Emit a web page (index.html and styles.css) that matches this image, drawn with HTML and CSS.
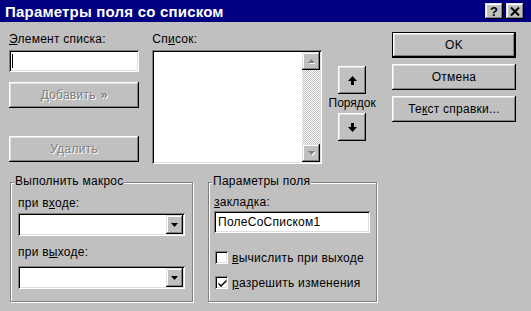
FILE: index.html
```html
<!DOCTYPE html>
<html lang="ru">
<head>
    <meta charset="UTF-8">
    <title>Параметры поля со списком</title>
    <link rel="stylesheet" href="styles.css">
</head>
<body>
    <div class="dialog">
        <div class="titlebar">
            <span class="title">Параметры поля со списком</span>
            <div class="title-btns">
                <div class="tbtn help">?</div>
                <div class="tbtn close">
                    <svg width="10" height="9" viewBox="0 0 10 9"><path d="M1 0.5 L9 8.5 M9 0.5 L1 8.5" stroke="#000" stroke-width="2"/></svg>
                </div>
            </div>
        </div>

        <div class="main">
            <div class="left">
                <div class="top-row">
                    <div class="col-element">
                        <label class="lbl"><u>Э</u>лемент списка:</label>
                        <div class="field element-field"><span class="caret"></span></div>
                        <div class="btn disabled add-btn">Добавить <span class="chev">»</span></div>
                        <div class="btn disabled del-btn">Удалить</div>
                    </div>

                    <div class="col-list">
                        <label class="lbl">Сп<u>и</u>сок:</label>
                        <div class="field listbox">
                            <div class="list-area"></div>
                            <div class="scrollbar">
                                <div class="sbtn">
                                    <svg width="7" height="5" viewBox="0 0 7 5"><path d="M4.5 1 L8 5 L1 5 Z" fill="#fff"/><path d="M3.5 0 L7 4 L0 4 Z" fill="#808080"/></svg>
                                </div>
                                <div class="track"></div>
                                <div class="sbtn">
                                    <svg width="7" height="5" viewBox="0 0 7 5"><path d="M1 1 L8 1 L4.5 5 Z" fill="#fff"/><path d="M0 0 L7 0 L3.5 4 Z" fill="#808080"/></svg>
                                </div>
                            </div>
                        </div>
                    </div>

                    <div class="col-order">
                        <div class="btn order-btn">
                            <svg width="9" height="9" viewBox="0 0 9 9"><path d="M4.5 0 L9 5 L6 5 L6 9 L3 9 L3 5 L0 5 Z" fill="#000"/></svg>
                        </div>
                        <div class="order-lbl">Порядок</div>
                        <div class="btn order-btn">
                            <svg width="9" height="9" viewBox="0 0 9 9"><path d="M3 0 L6 0 L6 4 L9 4 L4.5 9 L0 4 L3 4 Z" fill="#000"/></svg>
                        </div>
                    </div>
                </div>

                <div class="groups">
                    <div class="group macro-group">
                        <span class="legend">Выполнить макрос</span>
                        <label class="lbl">при в<u>х</u>оде:</label>
                        <div class="field combo">
                            <div class="combo-btn"><svg width="7" height="4" viewBox="0 0 7 4"><path d="M0 0 L7 0 L3.5 4 Z" fill="#000"/></svg></div>
                        </div>
                        <label class="lbl exit-lbl">при в<u>ы</u>ходе:</label>
                        <div class="field combo exit-combo">
                            <div class="combo-btn"><svg width="7" height="4" viewBox="0 0 7 4"><path d="M0 0 L7 0 L3.5 4 Z" fill="#000"/></svg></div>
                        </div>
                    </div>

                    <div class="group field-group">
                        <span class="legend">Параметры поля</span>
                        <label class="lbl"><u>з</u>акладка:</label>
                        <div class="field bookmark">ПолеСоСписком1</div>
                        <div class="check-row first">
                            <span class="checkbox"></span>
                            <span><u>в</u>ычислить при выходе</span>
                        </div>
                        <div class="check-row">
                            <span class="checkbox">
                                <svg width="9" height="9" viewBox="0 0 9 9"><path d="M0.5 3.5 L3 6 L8.5 0.5 L8.5 2.5 L3 8 L0.5 5.5 Z" fill="#000"/></svg>
                            </span>
                            <span><u>р</u>азрешить изменения</span>
                        </div>
                    </div>
                </div>
            </div>

            <div class="right-col">
                <div class="btn default-btn">OK</div>
                <div class="btn">Отмена</div>
                <div class="btn">Те<u>к</u>ст справки...</div>
            </div>
        </div>
    </div>
</body>
</html>
```

FILE: styles.css
```css
body {
    margin: 0;
    font-family: 'Liberation Sans', Arial, sans-serif;
    font-size: 12px;
    letter-spacing: 0.25px;
    color: #000;
}
.dialog {
    width: 531px;
    height: 311px;
    background-color: #c0c0c0;
    overflow: hidden;
}
.titlebar {
    height: 22px;
    background-color: #000080;
    color: #fff;
    display: flex;
    align-items: center;
    justify-content: space-between;
    padding: 0 7px 0 5px;
}
.title {
    font-weight: bold;
    font-size: 15px;
    letter-spacing: 0.2px;
}
.title-btns {
    display: flex;
    gap: 3px;
}
.tbtn {
    width: 18px;
    height: 16px;
    background-color: #c0c0c0;
    box-shadow: inset -1px -1px #000, inset 1px 1px #dfdfdf, inset -2px -2px #808080, inset 2px 2px #fff;
    color: #000;
    display: flex;
    align-items: center;
    justify-content: center;
}
.help {
    font-weight: bold;
    font-size: 13px;
}
.main {
    display: flex;
    padding: 10px 0 0 9px;
}
.left {
    width: 368px;
}
.top-row {
    display: flex;
    height: 150px;
}
.lbl {
    display: block;
    line-height: 15px;
}
.field {
    background-color: #fff;
    box-shadow: inset 1px 1px #808080, inset -1px -1px #fff, inset 2px 2px #000, inset -2px -2px #dfdfdf;
    box-sizing: border-box;
}
.btn {
    height: 26px;
    background-color: #c0c0c0;
    box-shadow: inset -1px -1px #000, inset 1px 1px #fff, inset -2px -2px #808080, inset 2px 2px #dfdfdf;
    box-sizing: border-box;
    display: flex;
    align-items: center;
    justify-content: center;
}
.disabled {
    color: #808080;
    text-shadow: 1px 1px 0 #fff;
}
.col-element {
    width: 131px;
}
.element-field {
    margin-top: 3px;
    height: 22px;
    padding: 4px 0 0 3px;
}
.caret {
    display: block;
    width: 1px;
    height: 14px;
    background-color: #000;
}
.add-btn {
    margin-top: 10px;
}
.chev {
    font-weight: bold;
    margin-left: 5px;
}
.del-btn {
    margin-top: 28px;
}
.col-list {
    width: 171px;
    margin-left: 13px;
}
.listbox {
    margin-top: 3px;
    height: 114px;
    padding: 2px;
    display: flex;
}
.list-area {
    flex: 1;
}
.scrollbar {
    width: 18px;
    display: flex;
    flex-direction: column;
}
.sbtn {
    height: 18px;
    background-color: #c0c0c0;
    box-shadow: inset -1px -1px #000, inset 1px 1px #dfdfdf, inset -2px -2px #808080, inset 2px 2px #fff;
    display: flex;
    align-items: center;
    justify-content: center;
}
.track {
    flex: 1;
    background: repeating-conic-gradient(#fff 0 25%, #c0c0c0 0 50%) 0 0 / 2px 2px;
}
.col-order {
    width: 50px;
    margin-left: 5px;
    padding-top: 34px;
    display: flex;
    flex-direction: column;
    align-items: center;
}
.order-btn {
    width: 28px;
    height: 28px;
}
.order-lbl {
    line-height: 19px;
    letter-spacing: 0;
}
.groups {
    display: flex;
    gap: 15px;
    margin-left: 1px;
}
.group {
    position: relative;
    height: 120px;
    box-sizing: border-box;
    border: 1px solid #808080;
    box-shadow: inset 1px 1px #fff, 1px 1px #fff;
}
.legend {
    position: absolute;
    top: -9px;
    left: 3px;
    padding: 0 1px;
    line-height: 15px;
    background-color: #c0c0c0;
}
.macro-group {
    width: 183px;
    padding: 13px 7px 0 7px;
}
.combo {
    margin-top: 2px;
    height: 23px;
    padding: 2px;
    display: flex;
    justify-content: flex-end;
}
.combo-btn {
    width: 17px;
    background-color: #c0c0c0;
    box-shadow: inset -1px -1px #000, inset 1px 1px #dfdfdf, inset -2px -2px #808080, inset 2px 2px #fff;
    display: flex;
    align-items: center;
    justify-content: center;
}
.exit-lbl {
    margin-top: 9px;
}
.exit-combo {
    margin-top: 6px;
}
.field-group {
    width: 169px;
    padding: 12px 6px 0 5px;
}
.bookmark {
    margin-top: 1px;
    height: 22px;
    padding: 4px 0 0 4px;
    line-height: 15px;
}
.check-row {
    display: flex;
    align-items: center;
    gap: 4px;
    height: 13px;
    margin-top: 12px;
    padding-left: 1px;
}
.check-row.first {
    margin-top: 18px;
}
.checkbox {
    width: 13px;
    height: 13px;
    box-sizing: border-box;
    background-color: #fff;
    box-shadow: inset 1px 1px #808080, inset -1px -1px #fff, inset 2px 2px #000, inset -2px -2px #dfdfdf;
    display: flex;
    align-items: center;
    justify-content: center;
    padding: 1px 0 0 1px;
}
.right-col {
    width: 124px;
    margin-left: 15px;
    display: flex;
    flex-direction: column;
    gap: 6px;
}
.default-btn {
    border: 1px solid #000;
}
```
